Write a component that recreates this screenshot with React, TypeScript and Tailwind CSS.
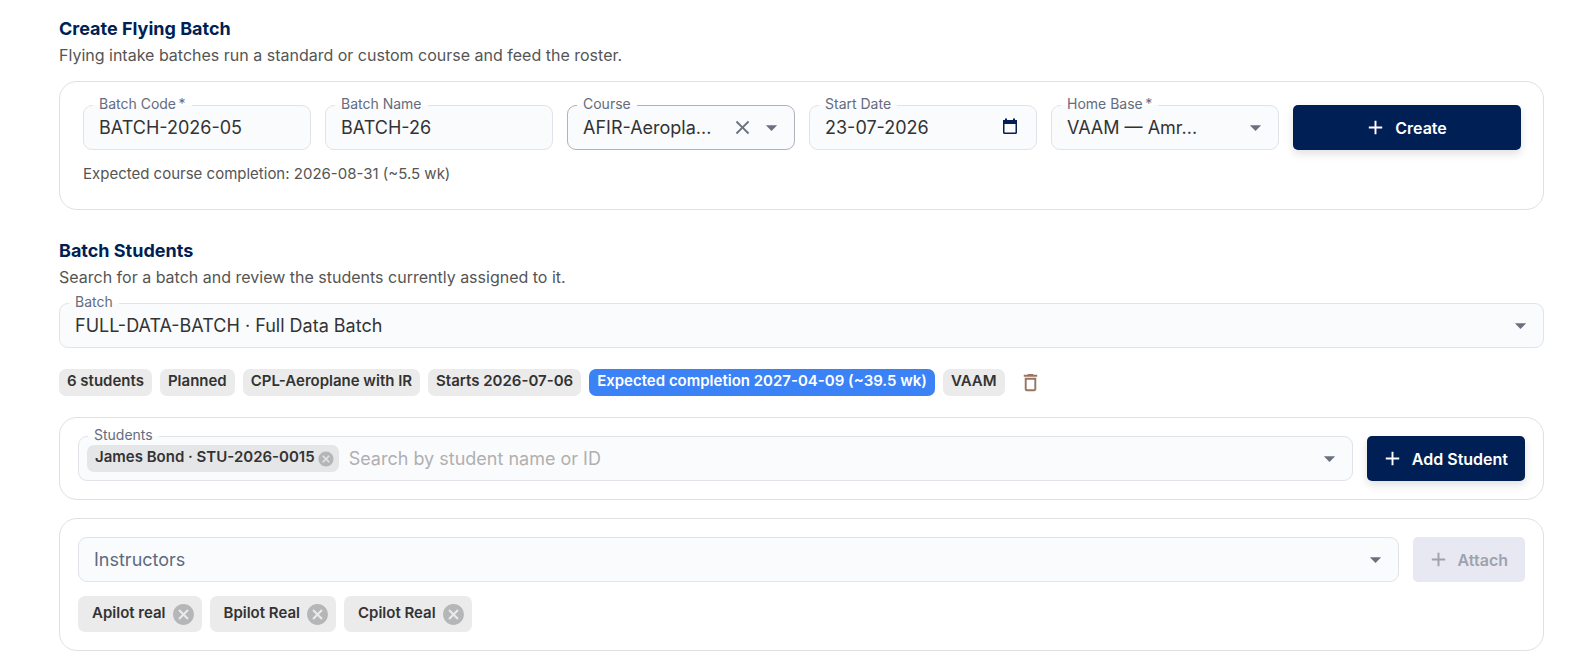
import { useState, type ReactNode } from 'react'
import { MdAdd, MdArrowDropDown, MdCancel, MdClose, MdDeleteOutline } from 'react-icons/md'

const control = 'h-full w-full min-w-0 appearance-none bg-transparent text-lg text-[#333333] outline-none'

interface FieldProps {
  id: string
  label: string
  floating?: boolean
  strong?: boolean
  className?: string
  children: ReactNode
}

// outlined box, the legend cuts the notch in the border
function Field({ id, label, floating = true, strong = false, className = '', children }: FieldProps) {
  return (
    <div className={`relative h-[45px] min-w-0 rounded-[9px] bg-[#fafbfd] ${className}`}>
      {floating ? (
        <fieldset
          className={`pointer-events-none absolute inset-x-0 bottom-0 -top-[9px] rounded-[9px] border px-[9px] ${strong ? 'border-[#aeb3bd]' : 'border-[#e0e4e9]'}`}
        >
          <legend className="px-1.5 pb-0.5 text-sm leading-4 text-[#646c7d]">
            <label htmlFor={id}>{label}</label>
          </legend>
        </fieldset>
      ) : (
        <div className="pointer-events-none absolute inset-0 flex items-center rounded-[9px] border border-[#e0e4e9] px-[15px]">
          <label htmlFor={id} className="text-lg text-[#5d6a7e]">{label}</label>
        </div>
      )}
      {children}
    </div>
  )
}

function DropArrow() {
  return (
    <MdArrowDropDown size={27} className="pointer-events-none absolute top-[9px] right-2.5 text-[#6b7080]" />
  )
}

function CalendarIcon() {
  return (
    <svg width="16" height="17" viewBox="0 0 16 17" fill="none" aria-hidden="true">
      <rect x="1.75" y="2.75" width="12.5" height="12.5" rx="0.8" stroke="#001f54" strokeWidth="1.5" />
      <path d="M1 2h14v4H1zM3 0.5h2V3H3zM11 0.5h2V3h-2z" fill="#001f54" />
    </svg>
  )
}

function Chip({ children, blue = false }: { children: ReactNode; blue?: boolean }) {
  return (
    <span
      className={`inline-flex h-[27px] items-center rounded-[7px] px-2 pb-0.5 text-[15px] font-semibold whitespace-nowrap ${blue ? 'bg-[#3b82f6] text-white' : 'bg-[#ebebeb] text-[#333333]'}`}
    >
      {children}
    </span>
  )
}

interface ActionButtonProps {
  children: ReactNode
  disabled?: boolean
}

function ActionButton({ children, disabled = false }: ActionButtonProps) {
  return (
    <button
      type="button"
      disabled={disabled}
      className="flex h-[45px] shrink-0 items-center justify-center gap-2 rounded-[5px] bg-[#001f54] pr-[17px] pl-3.5 text-base font-semibold text-white shadow-[0_4px_8px_rgba(0,0,0,0.12)] disabled:bg-[#e7e8f1] disabled:text-[#9ca3af] disabled:shadow-none"
    >
      <MdAdd size={23} />
      {children}
    </button>
  )
}

function Heading({ title, text }: { title: string; text: string }) {
  return (
    <header className="mb-3">
      <h2 className="text-lg leading-[27px] font-bold text-[#001f54]">{title}</h2>
      <p className="text-base leading-[27px] text-[#555555]">{text}</p>
    </header>
  )
}

export default function App() {
  const [code, setCode] = useState('BATCH-2026-05')
  const [name, setName] = useState('BATCH-26')
  const [start, setStart] = useState('23-07-2026')
  const [search, setSearch] = useState('')
  const [instructors, setInstructors] = useState(['Apilot real', 'Bpilot Real', 'Cpilot Real'])

  return (
    <main className="min-h-screen bg-white pt-[15px] pr-12 pb-4 pl-[59px] font-['Inter',sans-serif]">
      <section>
        <Heading
          title="Create Flying Batch"
          text="Flying intake batches run a standard or custom course and feed the roster."
        />
        <form className="rounded-[18px] border border-[#dfe0e2] py-[23px] pr-[22px] pl-[23px]">
          <div className="grid grid-cols-6 gap-3.5">
            <Field id="code" label={'Batch Code\u2009*'}>
              <input id="code" value={code} onChange={e => setCode(e.target.value)} className={`${control} px-4`} />
            </Field>
            <Field id="name" label="Batch Name">
              <input id="name" value={name} onChange={e => setName(e.target.value)} className={`${control} px-4`} />
            </Field>
            <Field id="course" label="Course" strong>
              <select id="course" className={`${control} pr-16 pl-4`}>
                <option>AFIR-Aeropla...</option>
              </select>
              <button type="button" aria-label="Clear course" className="absolute top-[11px] right-[41px] text-[#6b7080]">
                <MdClose size={23} />
              </button>
              <DropArrow />
            </Field>
            <Field id="start" label="Start Date">
              <input
                id="start"
                value={start}
                onChange={e => setStart(e.target.value)}
                className={`${control} pr-12 pl-4`}
              />
              <button type="button" aria-label="Pick a date" className="absolute top-[13px] right-[19px]">
                <CalendarIcon />
              </button>
            </Field>
            <Field id="base" label={'Home Base\u2009*'}>
              <select id="base" className={`${control} pr-10 pl-4`}>
                <option>VAAM — Amr...</option>
              </select>
              <DropArrow />
            </Field>
            <ActionButton>Create</ActionButton>
          </div>
          <p className="mt-3 text-[15px] leading-6 text-[#555555]">
            Expected course completion: 2026-08-31 (~5.5 wk)
          </p>
        </form>
      </section>

      <section className="mt-[27px]">
        <Heading
          title="Batch Students"
          text="Search for a batch and review the students currently assigned to it."
        />
        <Field id="batch" label="Batch">
          <select id="batch" className={`${control} pr-10 pl-4`}>
            <option>FULL-DATA-BATCH · Full Data Batch</option>
          </select>
          <DropArrow />
        </Field>

        <div className="my-[17px] flex flex-wrap items-center gap-2">
          <Chip>6 students</Chip>
          <Chip>Planned</Chip>
          <Chip>CPL-Aeroplane with IR</Chip>
          <Chip>Starts 2026-07-06</Chip>
          <Chip blue>Expected completion 2027-04-09 (~39.5 wk)</Chip>
          <Chip>VAAM</Chip>
          <button type="button" aria-label="Delete batch" className="p-1.5 text-[#9a7460]">
            <MdDeleteOutline size={23} />
          </button>
        </div>

        <div className="flex gap-3.5 rounded-[18px] border border-[#dfe0e2] p-[18px]">
          <Field id="students" label="Students" className="flex flex-1 items-center pl-[9px]">
            <span className="inline-flex h-[27px] shrink-0 items-center gap-0.5 rounded-[7px] bg-[#e5e6e8] pr-1 pl-2 text-[15px] font-semibold text-[#333333]">
              <span className="pb-0.5">James Bond · STU-2026-0015</span>
              <button type="button" aria-label="Remove James Bond" className="text-[#b5b6b8]">
                <MdCancel size={18} />
              </button>
            </span>
            <input
              id="students"
              value={search}
              onChange={e => setSearch(e.target.value)}
              placeholder="Search by student name or ID"
              className={`${control} pr-10 pl-2.5 placeholder:text-[#b0b0b0]`}
            />
            <DropArrow />
          </Field>
          <ActionButton>Add Student</ActionButton>
        </div>

        <div className="mt-[18px] rounded-[18px] border border-[#dfe0e2] p-[18px]">
          <div className="flex gap-3.5">
            <Field id="instructors" label="Instructors" floating={false} className="flex-1">
              <select id="instructors" className={`${control} pr-10 pl-4`}>
                <option value="" />
              </select>
              <DropArrow />
            </Field>
            <ActionButton disabled>Attach</ActionButton>
          </div>
          <ul className="mt-3.5 flex flex-wrap gap-2">
            {instructors.map(person => (
              <li
                key={person}
                className="flex h-9 items-center gap-[5px] rounded-[7px] bg-[#ebebeb] pr-1.5 pl-3.5 text-[15px] font-semibold text-[#333333]"
              >
                <span className="pb-0.5">{person}</span>
                <button
                  type="button"
                  aria-label={`Remove ${person}`}
                  onClick={() => setInstructors(instructors.filter(p => p !== person))}
                  className="text-[#b5b6b8]"
                >
                  <MdCancel size={25} />
                </button>
              </li>
            ))}
          </ul>
        </div>
      </section>
    </main>
  )
}
